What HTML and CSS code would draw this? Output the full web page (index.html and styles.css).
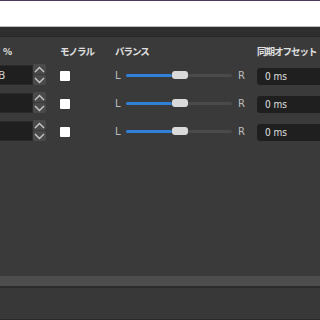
FILE: index.html
```html
<!DOCTYPE html>
<html lang="ja">
<head>
    <meta charset="UTF-8">
    <title>オーディオの詳細プロパティ</title>
    <link rel="stylesheet" href="styles.css">
</head>
<body>
    <div class="titlebar"></div>
    <div class="toolbar"></div>
    <main class="panel">
        <div class="grid">
            <!-- 見出し -->
            <div class="head">%</div>
            <div class="head">モノラル</div>
            <div class="head">バランス</div>
            <div class="head">同期オフセット</div>

            <!-- 1行目 -->
            <div class="spin">
                <div class="spin-field">dB</div>
                <div class="spin-btns">
                    <span class="spin-btn"><svg width="11" height="7" viewBox="0 0 11 7"><path d="M1 6 L5.5 1.5 L10 6" fill="none" stroke="#c8c8c8" stroke-width="1.4"/></svg></span>
                    <span class="spin-btn"><svg width="11" height="7" viewBox="0 0 11 7"><path d="M1 1 L5.5 5.5 L10 1" fill="none" stroke="#c8c8c8" stroke-width="1.4"/></svg></span>
                </div>
            </div>
            <div><span class="check"></span></div>
            <div class="balance">
                <span class="lr">L</span>
                <div class="track"><div class="fill" style="width: 46px"></div><div class="handle" style="left: 46px"></div></div>
                <span class="lr">R</span>
            </div>
            <div><div class="offset">0 ms</div></div>

            <!-- 2行目 -->
            <div class="spin">
                <div class="spin-field"></div>
                <div class="spin-btns">
                    <span class="spin-btn"><svg width="11" height="7" viewBox="0 0 11 7"><path d="M1 6 L5.5 1.5 L10 6" fill="none" stroke="#c8c8c8" stroke-width="1.4"/></svg></span>
                    <span class="spin-btn"><svg width="11" height="7" viewBox="0 0 11 7"><path d="M1 1 L5.5 5.5 L10 1" fill="none" stroke="#c8c8c8" stroke-width="1.4"/></svg></span>
                </div>
            </div>
            <div><span class="check"></span></div>
            <div class="balance">
                <span class="lr">L</span>
                <div class="track"><div class="fill" style="width: 46px"></div><div class="handle" style="left: 46px"></div></div>
                <span class="lr">R</span>
            </div>
            <div><div class="offset">0 ms</div></div>

            <!-- 3行目 -->
            <div class="spin">
                <div class="spin-field"></div>
                <div class="spin-btns">
                    <span class="spin-btn"><svg width="11" height="7" viewBox="0 0 11 7"><path d="M1 6 L5.5 1.5 L10 6" fill="none" stroke="#c8c8c8" stroke-width="1.4"/></svg></span>
                    <span class="spin-btn"><svg width="11" height="7" viewBox="0 0 11 7"><path d="M1 1 L5.5 5.5 L10 1" fill="none" stroke="#c8c8c8" stroke-width="1.4"/></svg></span>
                </div>
            </div>
            <div><span class="check"></span></div>
            <div class="balance">
                <span class="lr">L</span>
                <div class="track"><div class="fill" style="width: 46px"></div><div class="handle" style="left: 46px"></div></div>
                <span class="lr">R</span>
            </div>
            <div><div class="offset">0 ms</div></div>
        </div>
    </main>
    <div class="statusbar"></div>
    <div class="footer"></div>
</body>
</html>
```

FILE: styles.css
```css
body {
    margin: 0;
    padding: 0;
    background-color: #383838;
    font-family: "Open Sans", "Noto Sans CJK JP", sans-serif;
    overflow: hidden;
    height: 320px;
    display: flex;
    flex-direction: column;
}
.titlebar {
    height: 25px;
    background-color: #ffffff;
    border-top: 1px solid #4b3b62;
    border-bottom: 1px solid #bdbdbd;
}
.toolbar {
    height: 9px;
    background-color: #2e2e2e;
    border-bottom: 1px solid #262626;
}
.panel {
    height: 232px;
    background-color: #3a3a3a;
    padding-top: 7px;
    overflow: hidden;
}
.grid {
    display: grid;
    grid-template-columns: 60px 55px 142px 1fr;
    grid-template-rows: 14px 22px 22px 22px;
    row-gap: 6px;
    align-items: center;
}
.head {
    font-family: "Noto Sans CJK JP", sans-serif;
    font-size: 9.5px;
    font-weight: bold;
    letter-spacing: -1px;
    color: #e0e0e0;
    line-height: 14px;
    white-space: nowrap;
}
.head:first-child {
    padding-left: 3px;
}
.spin {
    display: flex;
    height: 22px;
}
.spin-field {
    width: 53px;
    height: 20px;
    margin-top: 1px;
    margin-left: -20px;
    box-sizing: border-box;
    background-color: #1f1f1f;
    border: 1px solid #2a2a2a;
    color: #e0e0e0;
    font-size: 11px;
    line-height: 18px;
    text-align: right;
    padding-right: 27px;
    overflow: hidden;
    white-space: nowrap;
}
.spin-btns {
    display: flex;
    flex-direction: column;
    gap: 1px;
}
.spin-btn {
    width: 13px;
    height: 10px;
    background-color: #4a4a4a;
    border-radius: 2px;
    display: flex;
    align-items: center;
    justify-content: center;
}
.check {
    display: block;
    width: 10px;
    height: 10px;
    background-color: #ffffff;
    border-radius: 1px;
    margin-top: 1px;
}
.balance {
    display: flex;
    align-items: center;
    padding-top: 1px;
}
.lr {
    font-family: "DejaVu Sans", sans-serif;
    font-size: 10px;
    color: #bdbdbd;
    width: 11px;
}
.balance .lr:last-child {
    margin-left: 6px;
}
.track {
    position: relative;
    width: 106px;
    height: 3px;
    background-color: #4a4a4a;
    border-radius: 2px;
}
.fill {
    height: 3px;
    background-color: #2f80d6;
    border-radius: 2px;
}
.handle {
    position: absolute;
    top: -3px;
    width: 16px;
    height: 8px;
    background-color: #dadada;
    border-radius: 3px;
}
.offset {
    height: 17px;
    margin-top: 2px;
    background-color: #1f1f1f;
    border-radius: 3px 0 0 3px;
    color: #e0e0e0;
    font-family: "DejaVu Sans Condensed", "DejaVu Sans", sans-serif;
    font-size: 10px;
    line-height: 17px;
    padding-left: 8px;
}
.statusbar {
    height: 10px;
    background-color: #4d4d4d;
    border-bottom: 2px solid #2b2b2b;
}
.footer {
    flex: 1;
    background-color: #383838;
    border-bottom: 1px solid #2a2a2a;
}
```
